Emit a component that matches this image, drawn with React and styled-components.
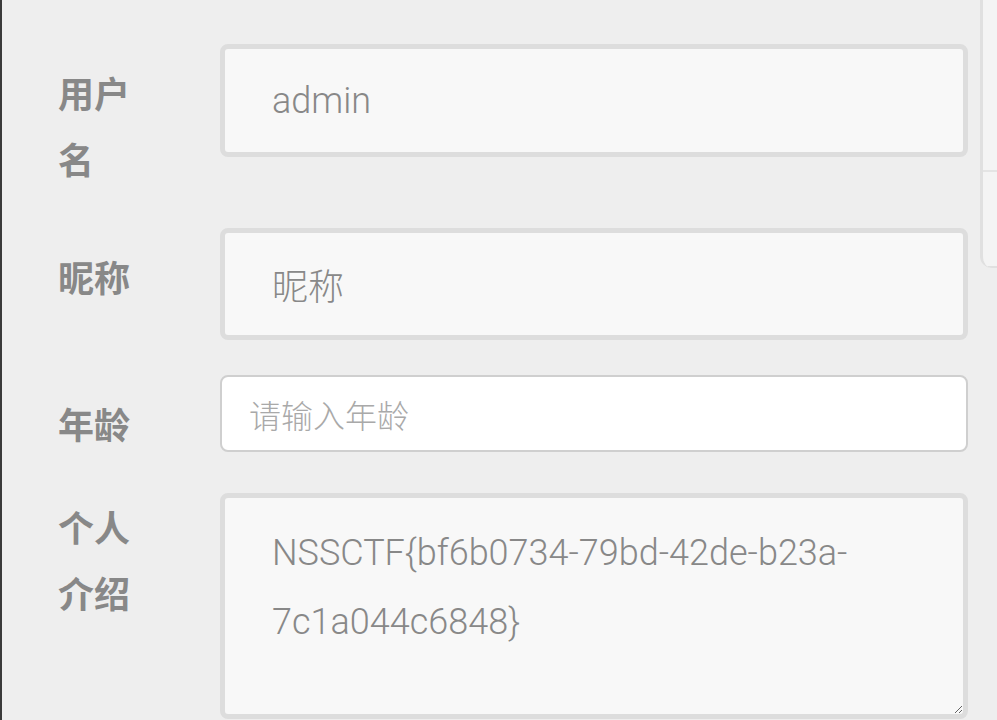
import React from "react";
import styled, { createGlobalStyle } from "styled-components";

const Global = createGlobalStyle`
  html, body { margin: 0; padding: 0; background: #eeeeee; overflow: hidden; }
  * { box-sizing: border-box; }
`;

const Page = styled.div`
  display: flex;
  align-items: flex-start;
  width: 997px;
  height: 720px;
  background: #eeeeee;
  border-left: 2px solid #3a3a3a;
  overflow: hidden;
`;

const Form = styled.form`
  flex: 1;
  display: flex;
  flex-direction: column;
  gap: 35px;
  padding: 44px 12px 0 56px;
`;

const Row = styled.div`
  display: grid;
  grid-template-columns: 162px 1fr;
  align-items: start;
`;

const Label = styled.label`
  width: 76px;
  padding-top: ${(p) => p.$top ?? 15}px;
  padding-bottom: 2px;
  font-family: "Noto Sans CJK SC", "Noto Sans", sans-serif;
  font-weight: 700;
  font-size: 36px;
  line-height: 66px;
  color: #888888;
`;

const BigInput = styled.input`
  display: block;
  width: 100%;
  height: ${(p) => p.$h}px;
  padding: 0 47px;
  border: 5px solid #dddddd;
  border-radius: 8px;
  background: #f8f8f8;
  font-family: Roboto, "Noto Sans CJK SC", sans-serif;
  font-weight: 300;
  font-size: 36px;
  color: #888888;
  outline: none;
`;

const AgeInput = styled.input`
  display: block;
  width: 100%;
  height: 77px;
  padding: 0 27px;
  border: 2px solid #cfcfcf;
  border-radius: 8px;
  background: #ffffff;
  font-family: "Noto Sans CJK SC", Roboto, sans-serif;
  font-weight: 300;
  font-size: 32px;
  color: #555;
  outline: none;
  &::placeholder { color: #a9a9a9; }
`;

const Bio = styled.textarea`
  display: block;
  width: 100%;
  height: 226px;
  padding: 21px 47px;
  border: 5px solid #dddddd;
  border-radius: 8px;
  background: #f8f8f8;
  font-family: Roboto, "Noto Sans CJK SC", sans-serif;
  font-weight: 300;
  font-size: 36px;
  line-height: 69px;
  color: #888888;
  outline: none;
  resize: vertical;
`;

const Aside = styled.aside`
  width: 17px;
  flex-shrink: 0;
  display: flex;
  flex-direction: column;
  border-left: 3px solid #e0e0e0;
  border-bottom-left-radius: 12px;
  overflow: hidden;
`;

const AsideTop = styled.div`
  height: 170px;
  background: #f4f4f4;
`;

const AsideBox = styled.div`
  height: 98px;
  background: #f4f4f4;
  border-top: 2px solid #e4e4e4;
  border-bottom: 2px solid #e0e0e0;
`;

export default function App() {
  return (
    <>
      <Global />
      <Page>
        <Form onSubmit={(e) => e.preventDefault()}>
          <Row>
            <Label>用户名</Label>
            <BigInput $h={113} value="admin" readOnly />
          </Row>
          <Row>
            <Label>昵称</Label>
            <BigInput $h={112} value="昵称" readOnly />
          </Row>
          <Row>
            <Label>年龄</Label>
            <AgeInput placeholder="请输入年龄" />
          </Row>
          <Row>
            <Label $top={0}>个人介绍</Label>
            <Bio value="NSSCTF{bf6b0734-79bd-42de-b23a-7c1a044c6848}" readOnly />
          </Row>
        </Form>
        <Aside>
          <AsideTop />
          <AsideBox />
        </Aside>
      </Page>
    </>
  );
}
